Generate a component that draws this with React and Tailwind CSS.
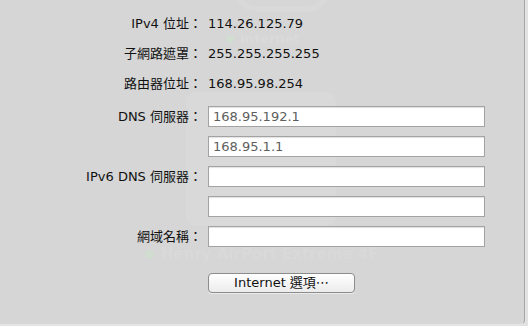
import React from "react";

const font = { fontFamily: '"DejaVu Sans", "Noto Sans CJK TC", sans-serif' };

function TextRow({ label, value }) {
  return (
    <div className="flex h-[30px] items-center">
      <div className="w-[202px] shrink-0 text-right text-[13px] text-[#111]">{label}</div>
      <div className="ml-[6px] text-[13px] text-[#111]">{value}</div>
    </div>
  );
}

function InputRow({ label, value }) {
  return (
    <div className="flex h-[21px] items-center">
      <div className="w-[202px] shrink-0 text-right text-[13px] text-[#111]">{label}</div>
      <div className="ml-[6px] flex h-[21px] w-[277px] items-center border border-[#a3a3a3] bg-white pl-[4px] text-[13px] text-[#5e5e5e] shadow-[inset_0_1px_1px_rgba(0,0,0,0.12)]">
        {value}
      </div>
    </div>
  );
}

export default function App() {
  return (
    <div className="h-[326px] w-[528px] bg-[#e2e2e2]" style={font}>
      <div className="relative h-[325px] w-[525px] overflow-hidden rounded-br-[5px] border-b border-r border-b-[#e6e6e6] border-r-[#a6a6a6] bg-[#d6d6d6]">
        {/* faint ghosted background graphics */}
        <div className="absolute left-[186px] top-[92px] h-[134px] w-[150px] rounded-[10px] bg-[#d9d9d9]" />
        <div className="absolute left-[232px] top-[-40px] h-[52px] w-[100px] rounded-full border-[6px] border-[#d9d9d9]" />
        <div className="absolute left-[226px] top-[32px] flex items-center gap-[6px] text-[13px] font-bold leading-none text-[#dadada]">
          <span className="inline-block h-[8px] w-[8px] rounded-full bg-[#d0ddd0]" />
          <span>Internet</span>
        </div>
        <div className="absolute left-[145px] top-[247px] flex items-center gap-[7px] text-[15px] font-bold leading-none text-[#d9d9d9]">
          <span className="inline-block h-[9px] w-[9px] rounded-full bg-[#d0ddd0]" />
          <span>Henry AirPort Extreme 4F</span>
        </div>

        <div className="relative flex flex-col pt-[9px]">
          <TextRow label="IPv4 位址：" value="114.26.125.79" />
          <TextRow label="子網路遮罩：" value="255.255.255.255" />
          <TextRow label="路由器位址：" value="168.95.98.254" />
          <div className="mt-[7px] flex flex-col gap-[9px]">
            <InputRow label="DNS 伺服器：" value="168.95.192.1" />
            <InputRow label="" value="168.95.1.1" />
            <InputRow label="IPv6 DNS 伺服器：" value="" />
            <InputRow label="" value="" />
            <InputRow label="網域名稱：" value="" />
          </div>
          <div className="ml-[208px] mt-[26px]">
            <button className="flex h-[20px] w-[147px] items-center justify-center rounded-[4px] border border-[#8c8c8c] bg-gradient-to-b from-white to-[#ececec] text-[13px] text-[#111] shadow-[0_1px_0_rgba(255,255,255,0.5)]">
              Internet 選項⋯
            </button>
          </div>
        </div>
      </div>
    </div>
  );
}
